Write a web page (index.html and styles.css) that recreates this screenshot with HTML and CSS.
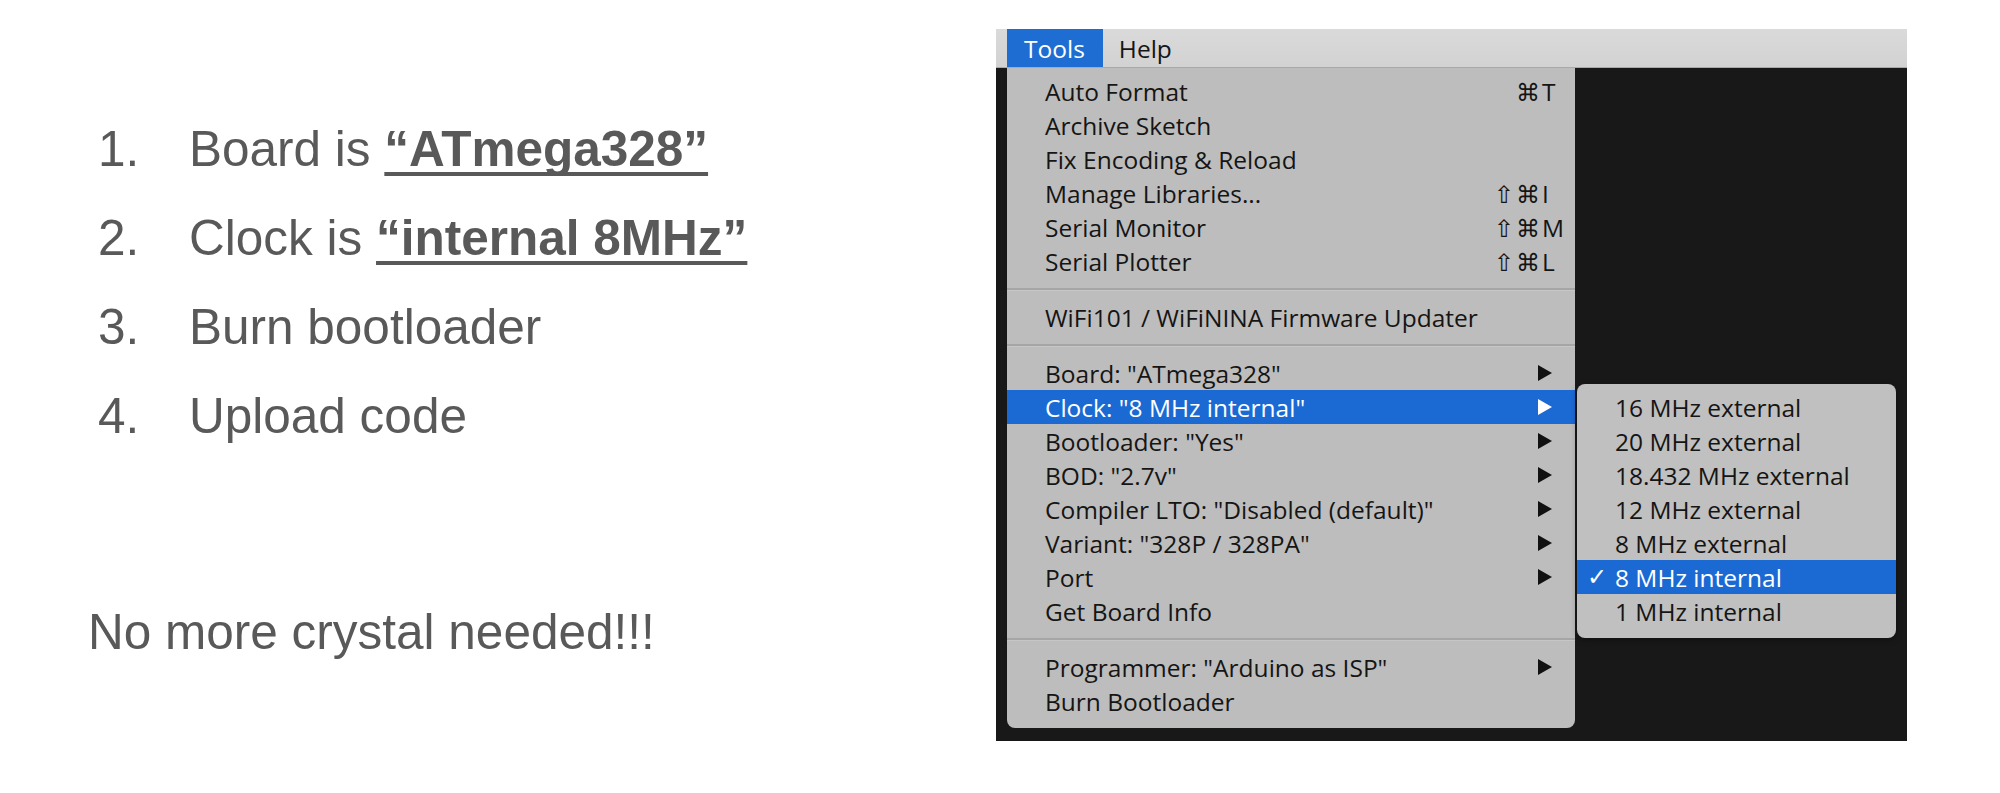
FILE: index.html
```html
<!DOCTYPE html>
<html lang="en">
<head>
<meta charset="utf-8">
<title>Burn bootloader</title>
<link rel="stylesheet" href="styles.css">
</head>
<body>
<div class="slide">
  <div class="left">
    <ol class="steps">
      <li><span class="num">1.</span><span class="txt">Board is <span class="em">“ATmega328”</span></span></li>
      <li><span class="num">2.</span><span class="txt">Clock is <span class="em">“internal 8MHz”</span></span></li>
      <li><span class="num">3.</span><span class="txt">Burn bootloader</span></li>
      <li><span class="num">4.</span><span class="txt">Upload code</span></li>
    </ol>
    <p class="note">No more crystal needed!!!</p>
  </div>
  <div class="shot">
    <div class="menubar">
      <span class="mb-item active">Tools</span>
      <span class="mb-item">Help</span>
    </div>
    <div class="menu">
      <div class="item"><span class="label">Auto Format</span><span class="sc"><span class="mods">⌘</span><span class="key">T</span></span></div>
      <div class="item"><span class="label">Archive Sketch</span></div>
      <div class="item"><span class="label">Fix Encoding &amp; Reload</span></div>
      <div class="item"><span class="label">Manage Libraries...</span><span class="sc"><span class="mods">⇧⌘</span><span class="key">I</span></span></div>
      <div class="item"><span class="label">Serial Monitor</span><span class="sc"><span class="mods">⇧⌘</span><span class="key">M</span></span></div>
      <div class="item"><span class="label">Serial Plotter</span><span class="sc"><span class="mods">⇧⌘</span><span class="key">L</span></span></div>
      <div class="sep"></div>
      <div class="item"><span class="label">WiFi101 / WiFiNINA Firmware Updater</span></div>
      <div class="sep"></div>
      <div class="item"><span class="label">Board: "ATmega328"</span><span class="arrow"></span></div>
      <div class="item selected">
        <span class="label">Clock: "8 MHz internal"</span><span class="arrow"></span>
        <div class="submenu">
          <div class="sub-item"><span class="check"></span><span>16 MHz external</span></div>
          <div class="sub-item"><span class="check"></span><span>20 MHz external</span></div>
          <div class="sub-item"><span class="check"></span><span>18.432 MHz external</span></div>
          <div class="sub-item"><span class="check"></span><span>12 MHz external</span></div>
          <div class="sub-item"><span class="check"></span><span>8 MHz external</span></div>
          <div class="sub-item selected"><span class="check">✓</span><span>8 MHz internal</span></div>
          <div class="sub-item"><span class="check"></span><span>1 MHz internal</span></div>
        </div>
      </div>
      <div class="item"><span class="label">Bootloader: "Yes"</span><span class="arrow"></span></div>
      <div class="item"><span class="label">BOD: "2.7v"</span><span class="arrow"></span></div>
      <div class="item"><span class="label">Compiler LTO: "Disabled (default)"</span><span class="arrow"></span></div>
      <div class="item"><span class="label">Variant: "328P / 328PA"</span><span class="arrow"></span></div>
      <div class="item"><span class="label">Port</span><span class="arrow"></span></div>
      <div class="item"><span class="label">Get Board Info</span></div>
      <div class="sep"></div>
      <div class="item"><span class="label">Programmer: "Arduino as ISP"</span><span class="arrow"></span></div>
      <div class="item"><span class="label">Burn Bootloader</span></div>
    </div>
  </div>
</div>
</body>
</html>
```
FILE: styles.css
```css
html, body {
  margin: 0;
  padding: 0;
  background: #ffffff;
}

.slide {
  display: flex;
  width: 2000px;
  height: 793px;
}

.left {
  width: 996px;
  box-sizing: border-box;
  padding: 104px 0 0 98px;
  font-family: "Liberation Sans", Arial, sans-serif;
  font-size: 49.5px;
  color: #595959;
}

.steps {
  list-style: none;
  margin: 0;
  padding: 0;
}

.steps li {
  display: flex;
  line-height: 89px;
  height: 89px;
}

.num {
  width: 91px;
  flex: none;
}

.em {
  font-weight: bold;
  text-decoration: underline;
  text-decoration-thickness: 4px;
  text-underline-offset: 6px;
  text-decoration-skip-ink: none;
}

.note {
  margin: 0;
  margin-top: 127px;
  margin-left: -10px;
  line-height: 89px;
}

.shot {
  margin-top: 29px;
  width: 911px;
  height: 712px;
  background: #181818;
  display: flex;
  flex-direction: column;
  font-family: "Open Sans", "DejaVu Sans", sans-serif;
  font-size: 24.5px;
  color: #151515;
}

.menubar {
  height: 39px;
  flex: none;
  display: flex;
  align-items: stretch;
  padding-left: 11px;
  background: linear-gradient(#dadada, #d2d2d2);
  box-sizing: border-box;
  border-bottom: 1px solid #a9a9a9;
}

.mb-item {
  display: flex;
  align-items: center;
  padding: 0 16px 0 16px;
  color: #151515;
}

.mb-item.active {
  background: #1e6dd3;
  color: #ffffff;
  padding: 0 18px 0 17px;
}

.menu {
  width: 568px;
  margin-left: 11px;
  box-sizing: border-box;
  padding: 6px 0 10px 0;
  background: #bdbdbd;
  border-radius: 0 0 8px 8px;
}

.item {
  position: relative;
  height: 34px;
  display: flex;
  align-items: center;
  padding: 0 8px 0 38px;
}

.item .label {
  flex: 1;
  white-space: nowrap;
}

.item.selected {
  background: #1b69d3;
  color: #ffffff;
}

.sc {
  display: flex;
  align-items: baseline;
}

.mods {
  text-align: right;
  font-family: "DejaVu Sans", sans-serif;
  font-size: 24px;
  letter-spacing: 2px;
}

.key {
  width: 25px;
  margin-left: 0;
}

.arrow {
  width: 0;
  height: 0;
  margin-right: 15px;
  border-left: 14px solid #111111;
  border-top: 8px solid transparent;
  border-bottom: 8px solid transparent;
}

.item.selected .arrow {
  border-left-color: #ffffff;
}

.sep {
  height: 22px;
  display: flex;
  align-items: center;
}

.sep::before {
  content: "";
  display: block;
  width: 100%;
  height: 2px;
  background: #a6a6a6;
  border-bottom: 1px solid #c6c6c6;
}

.submenu {
  position: absolute;
  left: calc(100% + 2px);
  top: -6px;
  width: 319px;
  box-sizing: border-box;
  padding: 6px 0 10px 0;
  background: #c0c0c0;
  border-radius: 8px;
  color: #151515;
  box-shadow: 0 2px 6px rgba(0, 0, 0, 0.35);
}

.sub-item {
  height: 34px;
  display: flex;
  align-items: center;
  padding-left: 10px;
  white-space: nowrap;
}

.sub-item .check {
  width: 28px;
  flex: none;
  font-family: "DejaVu Sans", sans-serif;
  font-size: 24px;
  font-weight: bold;
}

.sub-item.selected {
  background: #1b69d3;
  color: #ffffff;
}
```
